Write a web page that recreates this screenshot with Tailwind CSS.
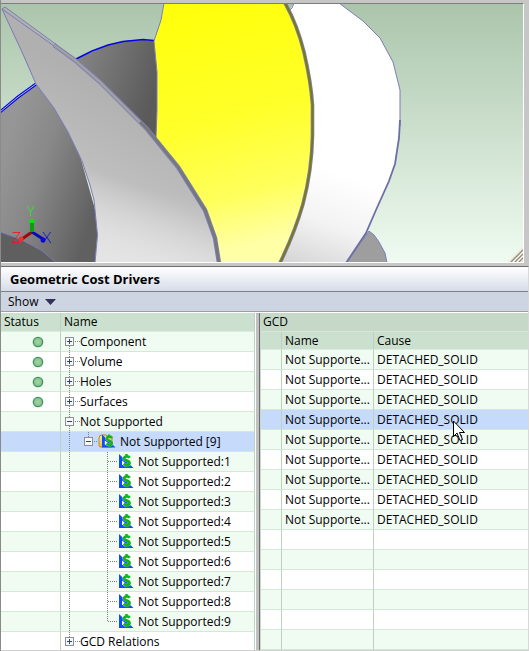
<!DOCTYPE html>
<html lang="en">
<head>
    <meta charset="UTF-8">
    <meta name="viewport" content="width=device-width, initial-scale=1.0">
    <script src="https://cdn.jsdelivr.net/npm/@tailwindcss/browser@4"></script>
    <title>Geometric Cost Drivers</title>
</head>
<body class="h-screen overflow-hidden flex flex-col bg-[#c6c6c6] border-l border-[#8a8a8a] font-['Open_Sans','Noto_Sans',sans-serif] text-[12px] leading-[19px] text-black">

    <!-- ICONS -->
    <svg class="absolute w-0 h-0" aria-hidden="true">
        <defs>
            <radialGradient id="dotFill"><stop offset="0" stop-color="#a9d3a4"/><stop offset="1" stop-color="#82bd85"/></radialGradient>
            <linearGradient id="folderFill" x1="0" y1="0" x2="1" y2="1"><stop offset="0" stop-color="#fff0a8"/><stop offset="1" stop-color="#d89b1c"/></linearGradient>
            <symbol id="dot" viewBox="0 0 12 12">
                <circle cx="6" cy="6" r="4.7" fill="url(#dotFill)" stroke="#3c9767" stroke-width="1.3"/>
            </symbol>
            <symbol id="box" viewBox="0 0 9 9">
                <rect x=".5" y=".5" width="8" height="8" fill="#f6f6f6" stroke="#8f8f8f"/>
                <path d="M2 4.5h5" stroke="#2a4390"/>
            </symbol>
            <symbol id="gcd" viewBox="0 0 15 15">
                <path d="M0 0 L14.500 14 H0z" fill="#0a50f5"/>
                <path d="M3 6.500 L8.500 11 H3z" fill="#fff"/>
                <path d="M10.5 3.6 C9 1.8 5 2 5 4.3 C5 6.8 10.6 6.2 10.6 9.1 C10.6 11.6 6.3 11.8 4.6 9.8" fill="none" stroke="#fff" stroke-width="3.4" stroke-opacity=".5"/>
                <path d="M10.8 3.8 C9.300 1.800 5.200 2 5.200 4.3 C5.200 6.8 10.6 6.2 10.6 9 C10.6 11.300 6.3 11.300 4.8 9.6" fill="none" stroke="#12b31c" stroke-width="2.6"/>
                <path d="M7.500 0v3 M8.500 10.5v3" stroke="#12b31c" stroke-width="2.4"/>
            </symbol>
        </defs>
    </svg>

    <!-- 3D VIEW -->
    <section class="shrink-0 border-t-3 border-[#c6c6c6] pr-[5px]">
        <div class="border-t border-b border-r border-t-[#7d7d7d] border-b-white border-r-white">
            <svg class="block w-full h-[258px]" viewBox="1 4 522 258" preserveAspectRatio="xMinYMin slice" role="img" aria-label="3D model">
                <defs>
                    <linearGradient id="sky" x1="0" y1="0" x2="0" y2="1"><stop offset="0" stop-color="#abc5ab"/><stop offset=".5" stop-color="#cde0ce"/><stop offset="1" stop-color="#effbf1"/></linearGradient>
                    <linearGradient id="yel" x1="0" y1="0" x2=".15" y2="1"><stop offset="0" stop-color="#ffff08"/><stop offset=".5" stop-color="#ffff2a"/><stop offset=".8" stop-color="#ffff5c"/><stop offset="1" stop-color="#ffffa6"/></linearGradient>
                    <linearGradient id="wht" gradientUnits="userSpaceOnUse" x1="330" y1="170" x2="295" y2="268"><stop offset="0" stop-color="#fff"/><stop offset=".5" stop-color="#f3f3f3"/><stop offset="1" stop-color="#d4d4d4"/></linearGradient>
                    <linearGradient id="blade" gradientUnits="userSpaceOnUse" x1="80" y1="60" x2="157" y2="85"><stop offset="0" stop-color="#838383"/><stop offset="1" stop-color="#5a5a5a"/></linearGradient>
                    <linearGradient id="body" gradientUnits="userSpaceOnUse" x1="0" y1="160" x2="100" y2="195"><stop offset="0" stop-color="#969696"/><stop offset=".4" stop-color="#888"/><stop offset="1" stop-color="#606060"/></linearGradient>
                    <linearGradient id="fin" gradientUnits="userSpaceOnUse" x1="160" y1="110" x2="90" y2="255"><stop offset="0" stop-color="#b0b0b0"/><stop offset=".5" stop-color="#bebebe"/><stop offset="1" stop-color="#e6e6e6"/></linearGradient>
                    <linearGradient id="finLow" gradientUnits="userSpaceOnUse" x1="160" y1="190" x2="140" y2="265"><stop offset="0" stop-color="#dcdcdc" stop-opacity="0"/><stop offset="1" stop-color="#e4e4e4"/></linearGradient>
                </defs>
                <rect x="1" y="4" width="900" height="258" fill="url(#sky)"/>
                <!-- right blade -->
                <path d="M347 262 L369 231 L374 235 L379 242 L385 253 L387 263 H347z" fill="#9e9e9e" stroke="#7a7db8"/>
                <path d="M286 3 L290 10 L294 3 H339 L363 21 L380 38 L393 62 L397 78 L400 90 V126 L398 148 L394 168 L389 181 L376 210 L366 233 L346 263 H275z" fill="url(#wht)"/>
                <path d="M290 10 L292 8 L294 3 M339 3 L363 21 L380 38 L393 62 L397 78 L400 90 V126" fill="none" stroke="#7a7db8"/>
                <path d="M400 120 L399 138 L395 164 L389 181 L376 210 L366 233 L346 263" fill="none" stroke="#6c6fa6" stroke-width="1.8"/>
                <!-- dark blade -->
                <path d="M76 59 L108 45 L123 41 L143 39.5 L154 41 L157 72 V140 L145 130z" fill="url(#blade)"/>
                <path d="M76 59 L92 51 L108 45 L123 41.5 L143 39.5 L154 40.5" fill="none" stroke="#0404e8" stroke-width="1.5"/>
                <!-- selected face -->
                <path d="M164 3 L161 20 L154 41 L157 72 V110 L156 137 L178 165 L206 210 L218 245 L220 263 H281 L295 230 L303 200 L310 170 L312 115 L310 85 L303 50 L294 22 L285 3z" fill="url(#yel)"/>
                <path d="M164 3 L161 20 L154 41 L157 72 V110 L156 137" fill="none" stroke="#7a7db8"/>
                <path d="M285 3 Q297 24 304 52 Q311 82 312.500 105 V135 Q312 170 303 204 Q295 232 280 263" fill="none" stroke="#7a7db8" stroke-width="3.6"/>
                <path d="M285 3 Q297 24 304 52 Q311 82 312.500 105 V135 Q312 170 303 204 Q295 232 280 263" fill="none" stroke="#7d7a0a" stroke-width="1.8"/>
                <!-- left body -->
                <path d="M0 112 L36 84 L70 120 L110 263 H0z" fill="url(#body)"/>
                <path d="M0 112 L18 97 L36 84" fill="none" stroke="#0404e8" stroke-width="3"/>
                <path d="M0 112 L18 97 L36 84" fill="none" stroke="#b4c4d4"/>
                <path d="M0 232 L20 239 L41 250 L57 263 H0z" fill="#5f5f5f" stroke="#7a7db8"/>
                <!-- fin -->
                <path d="M2 9 L36 84 L54 108 L68 132 L82 161 L90 185 L94 200 L97.500 235 L95 263 H220 L216 240 L203 208 L176 165 L147 130 L100 84 L76 60 L5 7z" fill="url(#fin)"/>
                <path d="M82 161 L90 185 L94 200 L97.500 235 L95 263 H220 L216 240 L203 208 L176 165z" fill="url(#finLow)"/>
                <path d="M54 45 L76 61 L100 82 L147 129 L178 167 L205 210 L215 238 L219 263" fill="none" stroke="#7a7db8" stroke-width="4.4"/>
                <path d="M54 45 L76 61 L100 82 L147 129 L178 167" fill="none" stroke="#a0a0a0" stroke-width="2.6"/>
                <path d="M140 122 L147 129 L178 167 L205 210 L215 238 L219 263" fill="none" stroke="#787878" stroke-width="2.6"/>
                <path d="M54 46 L2 9 L5 7 L57 45 M2 9 L22 52 L36 84 L54 108 L68 132 L82 161 L90 185 L94 200 L97.500 235 L95 263" fill="none" stroke="#7a7db8"/>
                <!-- axes -->
                <path d="M32 232 L22 239" stroke="#a00808" stroke-width="3"/>
                <circle cx="21" cy="239" r="2.500" fill="#ff2a2a"/>
                <path d="M32 232 L43 239" stroke="#0a0ab4" stroke-width="3"/>
                <circle cx="43" cy="240" r="2.500" fill="#0808e0"/>
                <path d="M32 232 V221" stroke="#0c9c0c" stroke-width="4"/>
                <ellipse cx="32" cy="221" rx="3" ry="2" fill="#10e010"/>
                <g font-family="Lato, sans-serif" font-weight="300" font-size="15">
                    <text x="27" y="216" font-size="13" fill="#10f010">Y</text>
                    <text x="12" y="243" fill="#f01010">Z</text>
                    <text x="42" y="243" fill="#0808d8">X</text>
                </g>
                <!-- resize grip -->
                <path d="M508 262 L523 247 V262z" fill="#ece5d6"/>
                <path d="M511 262 L523 250 M515 262 L523 254 M519 262 L523 258" stroke="#8f8877" stroke-width="1.200"/>
                <path d="M513 262 L523 252 M517 262 L523 256" stroke="#fff"/>
            </svg>
        </div>
    </section>

    <!-- PANEL -->
    <main class="flex-1 min-h-0 flex flex-col mt-[3px] border-t border-b border-t-[#6e6e6e] border-b-[#cfcfcf] border-r border-r-[#d8d8d8]">
        <h1 class="shrink-0 h-[25px] pl-[9px] text-[13px] leading-6 font-bold bg-linear-to-b from-white to-[#d6dce8] border-b border-[#808080]">Geometric Cost Drivers</h1>
        <div class="shrink-0 h-5 pl-[7px] bg-[#cdd5e3] border-b border-[#a19da8]">
            <button type="button" class="flex items-center gap-[7px] leading-5">
                Show
                <svg class="w-[11px] h-[6px]" viewBox="0 0 11 6" aria-hidden="true"><path d="M0 0H11L5.500 6z" fill="#34305a"/></svg>
            </button>
        </div>

        <div class="flex-1 min-h-0 flex border-t border-white">
            <!-- TREE -->
            <div class="w-[255px] shrink-0 overflow-hidden bg-white border-r border-white">
                <table class="w-full table-fixed border-separate border-spacing-0">
                    <colgroup><col class="w-[60px]"><col></colgroup>
                    <thead>
                        <tr class="bg-[#cbe0ce] text-left">
                            <th class="h-[19px] p-0 pl-[3px] font-normal leading-[18px] border-b border-[#dcecde] border-r border-r-[#bdd1c0]">Status</th>
                            <th class="h-[19px] p-0 pl-[3px] font-normal leading-[18px] border-b border-[#dcecde] border-r border-r-[#bdd1c0]">Name</th>
                        </tr>
                    </thead>
                    <tbody id="tree"></tbody>
                </table>
            </div>
            <div class="w-[4px] shrink-0 bg-[#c0c0c0] border-r border-[#6e6e6e]"></div>
            <!-- GCD LIST -->
            <div class="flex-1 min-w-0 overflow-hidden bg-white border-l border-[#c8d9ca]">
                <table class="w-full table-fixed border-separate border-spacing-0">
                    <colgroup><col class="w-[21px]"><col class="w-[92px]"><col></colgroup>
                    <thead>
                        <tr class="bg-[#c6d9c9] text-left">
                            <th colspan="3" class="h-[19px] p-0 pl-[2px] font-normal leading-[18px] border-b border-[#d6e6d8]">GCD</th>
                        </tr>
                        <tr class="bg-[#cbe0ce] text-left">
                            <th class="h-[18px] p-0 border-b border-[#dcecde] border-r border-r-[#bdd1c0]"></th>
                            <th class="h-[18px] p-0 pl-[3px] font-normal leading-[17px] border-b border-[#dcecde] border-r border-r-[#bdd1c0]">Name</th>
                            <th class="h-[18px] p-0 pl-[3px] font-normal leading-[17px] border-b border-[#dcecde]">Cause</th>
                        </tr>
                    </thead>
                    <tbody id="gcds"></tbody>
                </table>
            </div>
        </div>
    </main>

    <script>
    // level 0: root nodes, 1: group, 2: leaves
    const nodes = [
        { label: 'Component', level: 0, status: true },
        { label: 'Volume', level: 0, status: true },
        { label: 'Holes', level: 0, status: true },
        { label: 'Surfaces', level: 0, status: true },
        { label: 'Not Supported', level: 0, open: true },
        { label: 'Not Supported [9]', level: 1, open: true, selected: true },
    ];
    for (let i = 1; i <= 9; i++) nodes.push({ label: 'Not Supported:' + i, level: 2, last: i === 9 });
    nodes.push({ label: 'GCD Relations', level: 0, last: true });

    const plus = '<path d="M8.5 7v5" stroke="#2a4390"/>';
    const dots = d => `<path d="${d}" fill="none" stroke="#808080" stroke-dasharray="1 1"/>`;

    // dotted lines and expander in front of a node
    function branch(n, i) {
        if (n.level === 0) {
            const up = i > 0 ? 'M8.5 0V5' : '';
            const down = n.last ? '' : 'M8.5 14V20';
            return `<svg class="w-[19px] h-5 shrink-0" viewBox="0 0 19 20">${dots(up + down + 'M14 9.5H19')}<use href="#box" x="4" y="5" width="9" height="9"/>${n.open ? '' : plus}</svg>`;
        }
        if (n.level === 1) {
            return `<svg class="w-[37px] h-5 shrink-0" viewBox="0 0 37 20">${dots('M8.5 0V20M27.5 0V5M33 9.5H37')}<use href="#box" x="23" y="5" width="9" height="9"/></svg>`;
        }
        return `<svg class="w-[58px] h-5 shrink-0" viewBox="0 0 58 20">${dots('M8.500 0V20M46.500 0V' + (n.last ? 9 : 20) + 'M47 9.500H57')}</svg>`;
    }

    function icon(n) {
        if (n.level === 0) return '';
        if (n.level === 1) return `<svg class="w-[18px] h-[15px] mr-1 shrink-0" viewBox="0 0 18 15"><path d="M1 4Q1 1 4 1H8L9 2H14V13H3Q1 13 1 11z" fill="url(#folderFill)" stroke="#b98218"/><use href="#gcd" x="4" y="0" width="14" height="15"/></svg>`;
        return '<svg class="w-[15px] h-[15px] mr-1 shrink-0"><use href="#gcd"/></svg>';
    }

    function rowBg(i, selected) {
        if (selected) return 'bg-[#c6dbfc]';
        return i % 2 ? 'bg-white' : 'bg-[#f0fbf2]';
    }

    document.getElementById('tree').innerHTML = nodes.map((n, i) => `
        <tr class="${rowBg(i, n.selected)}">
            <td class="h-5 p-0 border-b border-b-[#d3e8d6] border-r border-r-[#bdd1c0]">${n.status ? '<svg class="block w-3 h-3 ml-[31px]" role="img" aria-label="OK"><use href="#dot"/></svg>' : ''}</td>
            <td class="h-5 p-0 border-b border-b-[#d3e8d6] border-r border-r-[#bdd1c0]">
                <div class="flex items-center h-[19px] whitespace-nowrap">${branch(n, i)}${icon(n)}<span>${n.label}</span></div>
            </td>
        </tr>`).join('');

    const cursor = `<svg class="absolute left-[76px] top-[10px] w-3 h-[22px] z-10" viewBox="0 0 12 22" aria-hidden="true"><path d="M.5 1V16.500L4 13L7 20.500L9.500 19.500L6.500 12.500H11.500z" fill="#fff" stroke="#000"/></svg>`;

    let rows = '';
    for (let i = 0; i < 15; i++) {
        const filled = i < 9;
        rows += `
        <tr class="${rowBg(i, i === 3)}">
            <td class="h-5 p-0 border-b border-b-[#d3e8d6] border-r border-r-[#bdd1c0]"></td>
            <td class="h-5 p-0 pl-[3px] border-b border-b-[#d3e8d6] border-r border-r-[#bdd1c0] whitespace-nowrap">${filled ? 'Not Supporte...' : ''}</td>
            <td class="h-5 p-0 pl-[3px] border-b border-b-[#d3e8d6] whitespace-nowrap"><div class="relative">${filled ? 'DETACHED_SOLID' : ''}${i === 3 ? cursor : ''}</div></td>
        </tr>`;
    }
    document.getElementById('gcds').innerHTML = rows;
    </script>
</body>
</html>
